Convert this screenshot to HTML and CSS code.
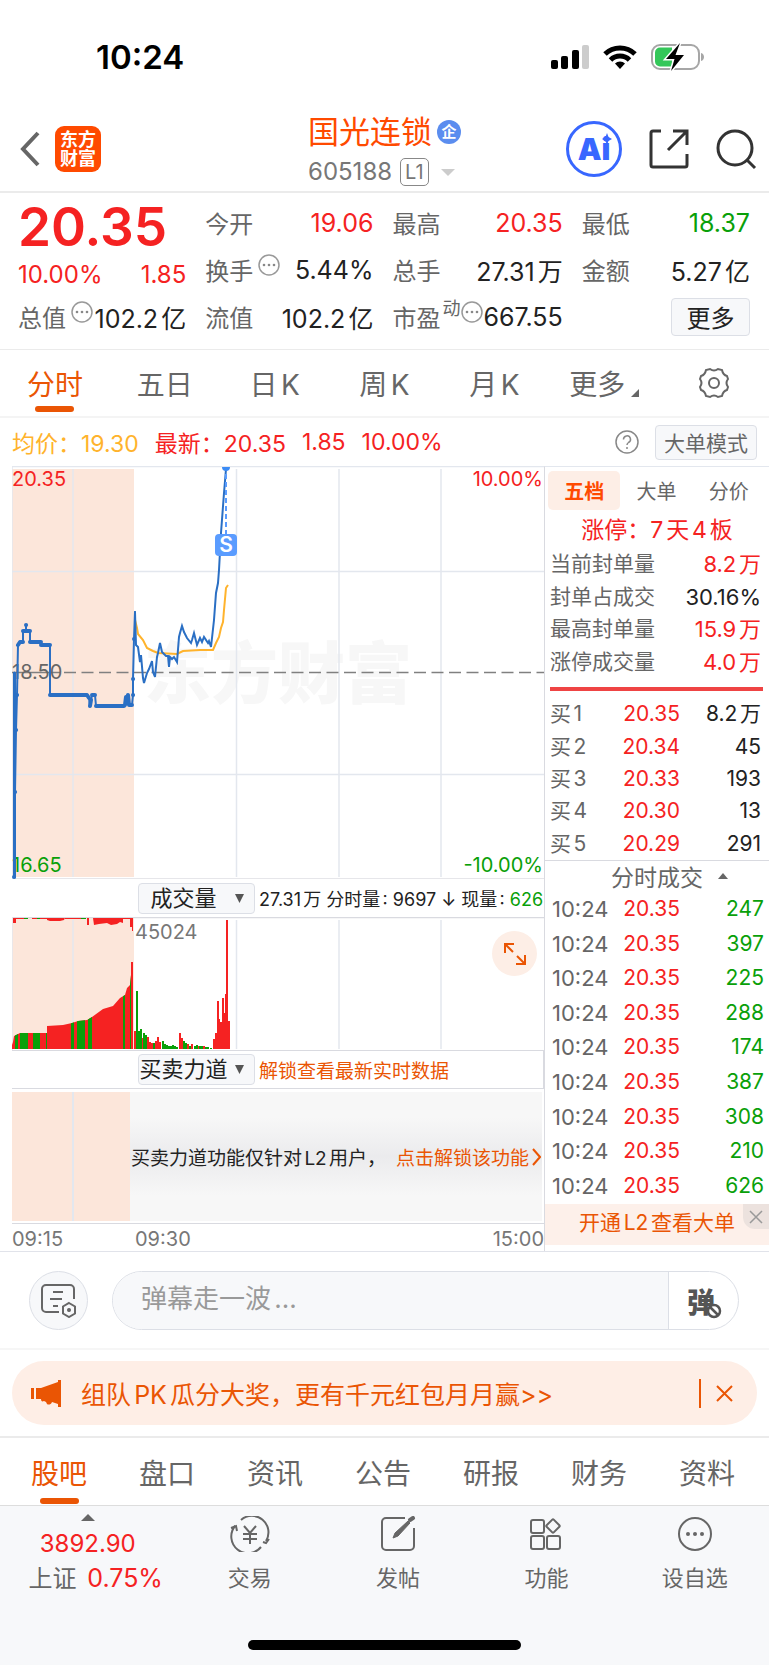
FILE: index.html
```
<!DOCTYPE html>
<html lang="zh-CN">
<head>
    <meta charset="UTF-8">
    <meta name="viewport" content="width=device-width, initial-scale=1.0">
    <title>国光连锁 605188</title>
    <link rel="stylesheet" href="styles.css">
</head>
<body>
    <div class="status-bar">
        <span class="time">10:24</span>
        <div class="status-icons">
            <svg width="38" height="26" viewBox="0 0 38 26">
                <rect x="0" y="16" width="7" height="9" rx="2"/>
                <rect x="10" y="12" width="7" height="13" rx="2"/>
                <rect x="21" y="6" width="7" height="19" rx="2"/>
                <rect x="31" y="1" width="7" height="24" rx="2" fill="#cccccc"/>
            </svg>
            <svg width="34" height="26" viewBox="0 0 34 26" fill="none" stroke="#000" stroke-width="5">
                <path d="M2 10a21.500 21.500 0 0 1 30 0"/>
                <path d="M7.500 16a13.500 13.500 0 0 1 19 0"/>
                <path d="M17 25l-5-5.500a7 7 0 0 1 10 0z" fill="#000" stroke="none"/>
            </svg>
            <svg width="54" height="28" viewBox="0 0 54 28">
                <rect x="1" y="2" width="47" height="24" rx="8" fill="none" stroke="#a6a6a6" stroke-width="2"/>
                <path d="M50 10c4 1 4 7 0 8z" fill="#a6a6a6"/>
                <path d="M9 4.500h12v19H9a5 5 0 0 1-5-5v-9a5 5 0 0 1 5-5z" fill="#34c759"/>
                <path d="M29 0L15 16h8.500L20 28l13-16h-8.500z" stroke="#fff" stroke-width="3" paint-order="stroke"/>
            </svg>
        </div>
    </div>

    <header class="header">
        <div class="header-left">
            <a href="#" class="back" aria-label="返回">
                <svg width="20" height="36" viewBox="0 0 20 36" fill="none" stroke="#666" stroke-width="4"><path d="M18 2L3 18l15 16"/></svg>
            </a>
            <div class="logo">东方<br>财富</div>
        </div>
        <div class="header-title">
            <h1>国光连锁<span class="badge">企</span></h1>
            <div class="code">605188<span class="level">L1</span><i class="tri-down"></i></div>
        </div>
        <div class="header-right">
            <button class="ai" aria-label="Ai">
                <span>Ai</span>
                <svg class="spark" width="10" height="12" viewBox="0 0 10 12"><path d="M5 0l1.500 4L10 6 6.500 8 5 12 3.500 8 0 6l3.500-2z" fill="#3867ff"/></svg>
            </button>
            <button aria-label="分享">
                <svg width="40" height="40" viewBox="0 0 40 40" fill="none" stroke="#333" stroke-width="3"><path d="M12 2H4a2 2 0 0 0-2 2v32a2 2 0 0 0 2 2h32a2 2 0 0 0 2-2V25M19 21L38 2M24 2h14v14"/></svg>
            </button>
            <button aria-label="搜索">
                <svg width="41" height="42" viewBox="0 0 41 42" fill="none" stroke="#333" stroke-width="3"><circle cx="19" cy="20" r="17"/><path d="M31 32l8 8"/></svg>
            </button>
        </div>
    </header>

    <section class="quote">
        <div class="quote-col">
            <div class="price red">20.35</div>
            <div class="change red"><span>10.00%</span><span>1.85</span></div>
            <div class="item"><span class="label">总值<svg class="dots" viewBox="0 0 22 22"><use href="#dots"/></svg></span><span>102.2亿</span></div>
        </div>
        <div class="quote-col">
            <div class="item"><span class="label">今开</span><span class="red">19.06</span></div>
            <div class="item"><span class="label">换手<svg class="dots far" viewBox="0 0 22 22"><use href="#dots"/></svg></span><span>5.44%</span></div>
            <div class="item"><span class="label">流值</span><span>102.2亿</span></div>
        </div>
        <div class="quote-col">
            <div class="item"><span class="label">最高</span><span class="red">20.35</span></div>
            <div class="item"><span class="label">总手</span><span>27.31万</span></div>
            <div class="item"><span class="label">市盈<sup>动</sup><svg class="dots near" viewBox="0 0 22 22"><g id="dots"><circle cx="11" cy="11" r="10" fill="none" stroke="#999" stroke-width="1.500"/><circle cx="6" cy="11" r="1.300" fill="#888"/><circle cx="11" cy="11" r="1.300" fill="#888"/><circle cx="16" cy="11" r="1.300" fill="#888"/></g></svg></span><span>667.55</span></div>
        </div>
        <div class="quote-col">
            <div class="item"><span class="label">最低</span><span class="green">18.37</span></div>
            <div class="item"><span class="label">金额</span><span>5.27亿</span></div>
            <div class="item end"><button class="more">更多</button></div>
        </div>
    </section>

    <nav class="tabs period">
        <a href="#" class="active">分时</a>
        <a href="#">五日</a>
        <a href="#">日K</a>
        <a href="#">周K</a>
        <a href="#">月K</a>
        <a href="#">更多<i class="corner"></i></a>
        <a href="#" aria-label="设置">
            <svg width="32" height="32" viewBox="0 0 32 32" fill="none" stroke="#666" stroke-width="2"><path d="M12 2q4 3 8 0l4 1q1 5 5 6l1 3q-3 4 0 8l-1 3q-4 1-5 6l-4 1q-4-3-8 0l-4-1q-1-5-5-6l-1-3q3-4 0-8l1-3q4-1 5-6z"/><circle cx="16" cy="16" r="5"/></svg>
        </a>
    </nav>

    <div class="summary">
        <span class="avg">均价：19.30</span>
        <span class="red">最新：20.35</span>
        <span class="red">1.85</span>
        <span class="red">10.00%</span>
        <button class="help" aria-label="帮助">
            <svg width="24" height="24" viewBox="0 0 24 24" fill="none" stroke="#888" stroke-width="1.500"><circle cx="12" cy="12" r="11"/><path d="M8.500 9.500a3.500 3.500 0 1 1 5 3q-1.500 1-1.500 2.500M12 17v2"/></svg>
        </button>
        <button class="mode">大单模式</button>
    </div>

    <main class="market">
        <div class="charts">
            <svg class="chart" viewBox="0 0 532 413">
                <rect x="0" y="3" width="122" height="408" fill="#fce6da"/>
                <text class="watermark" x="132" y="232">东方财富</text>
                <g stroke="#e3e7ee" stroke-width="1.500" fill="none">
                    <path d="M0 .5H532M0 413V0M61 3V411M224.500 3V411M327 3V411M429 3V411M0 105.500H532M0 308.500H532"/>
                </g>
                <path d="M0 412.500H532" stroke="#e6e6ea"/>
                <path d="M0 206.500H48" stroke="#808080" stroke-width="1.500"/>
                <path d="M52 206.500H532" stroke="#808080" stroke-width="1.500" stroke-dasharray="12 5.500"/>
                <text x="0" y="20" fill="#f52222">20.35</text>
                <text x="0" y="213" fill="#666">18.50</text>
                <text x="0" y="406" fill="#09a009">16.65</text>
                <text x="531" y="20" fill="#f52222" text-anchor="end">10.00%</text>
                <text x="531" y="406" fill="#09a009" text-anchor="end">-10.00%</text>
                <polyline fill="none" stroke="#ffb32c" stroke-width="2" points="123,154 125,162 126,168 131,174 135,182 141,185 146,187 165,188 171,185 188,184 201,184 204,177 207,171 209,162 211,156 212,144 214,122 216,119"/>
                <g fill="none" stroke="#2a6fc4" stroke-linejoin="round" stroke-linecap="round">
                    <polyline stroke-width="2" points="2,207 2,411 3,326 4,264 5,229 6,179 8,176 11,176 11,165 14,165 14,159 14,165 18,165 18,176 29,176 29,179 38,179 38,229 75,229 77,232 78,240 80,229 83,229 84,240 113,240 114,231 116,229 117,239 120,239 121,229 121,213 122,173 123,146"/>
                    <path stroke-width="3" d="M2.500 207V411"/>
                    <path stroke-width="4" d="M2 411h.1M3 326h.1M4 264h.1M5 229h.1M6 179l2-3h3M11 165h7M14 159h.1M18 176h11M29 179h9M38 229H75l2 3M78 240l1-6M80 229h3M84 240H112M113 239l1-8M116 229l1 10h3M121 229h.1M121 213h.1M122 173h.1"/>
                    <polyline stroke-width="2" stroke-linejoin="miter" points="123,146 124,179 126,181 128,196 129,189 131,212 132,217 135,207 137,203 140,195 141,206 143,211 145,191 146,187 148,177 150,186 154,190 156,190 157,201 158,191 160,193 162,191 165,196 167,171 168,167 170,160 172,166 175,172 179,177 180,174 182,167 185,179 188,172 190,176 192,171 196,177 197,175 199,181 202,154 204,127 206,117 207,104 209,67 212,27 214,3"/>
                </g>
                <path d="M214 8V68" stroke="#5a9cff" stroke-width="2" stroke-dasharray="5 3"/>
                <path d="M210 1h8a4 4 0 1 1-8 0z" fill="#3b8bf5"/>
                <rect x="203" y="68" width="22" height="22" rx="4" fill="#5a9cff"/>
                <text class="mark" x="214" y="86" text-anchor="middle">S</text>
            </svg>

            <div class="bar">
                <select class="indicator" aria-label="指标一"><option>成交量</option></select>
                <span class="bar-info">27.31万 分时量: 9697 ↓ 现量: <span class="green">626</span></span>
            </div>

            <div class="volume">
                <svg class="chart" viewBox="0 0 532 133">
                    <rect x="0" y="1" width="122" height="131" fill="#fce6da"/>
                    <path d="M0 .5H532" stroke="#d9dae0" stroke-width="1.500"/>
                    <path d="M61 3V132M224.500 3V132M327 3V132M429 3V132M0 0V133" stroke="#e3e7ee" stroke-width="1.500"/>
                    <clipPath id="auction"><path id="area" d="M0 132V128l1-3 1-6 6-3H35v-7l16-1 9-2 6-2 9-1 5-3 11-8 10-3 7-8 5-3 2-7 3-3 1-10V45h2v87z"/></clipPath>
                    <use href="#area" fill="#f52222"/>
                    <path clip-path="url(#auction)" fill="#09a009" d="M3 40h3v92H3zM8 40h8v92H8zM21 40h7v92h-7zM34 40h1v92h-1zM59 40h3v92h-3zM65 40h8v92h-8zM76 40h4v92h-4zM111 40h2v92h-2zM118 40h1v92h-1z"/>
                    <path fill="#f52222" d="M1 1h3v5H1zM35 1h18l-1 2-4 1H38l-3-1zM75 1h2v7h-2zM81 1h30v5l-3-1-3 2-6 1-4-2-8 1-5 1zM118 1h3v13h-1v-4h-2zM4 1h8v1H4zM20 1h15v1H20zM53 1h17v1H53zM111 1h8v1h-8z"/>
                    <path fill="#09a009" d="M12 1h4v1h-4zM25 1h3v1h-3zM69 1h5v1h-5z"/>
                    <path stroke="#f52222" stroke-width="2" fill="none" d="M123 132V114M130 132V121M136 132V120M138 132V125M140 132V126M144 132V124M146 132V120M148 132V125M168 132V116M170 132V121M176 132V127M180 132V127M186 132V129M192 132V129M202 132V122M204 132V116M206 132V84M207 132V102M209 132V105M211 132V81M213 132V96M214 132V77M215 132V3M217 132V104"/>
                    <path stroke="#09a009" stroke-width="2" fill="none" d="M125 132V74M127 132V114M129 132V112M132 132V116M134 132V118M142 132V126M151 132V124M153 132V127M155 132V128M157 132V129M159 132V129M161 132V128M163 132V129M165 132V130M172 132V124M174 132V126M178 132V129M183 132V129M185 132V128M188 132V129M190 132V129M194 132V130M196 132V130M199 132V131"/>
                    <text x="123" y="22" fill="#777">45024</text>
                </svg>
                <button class="expand" aria-label="展开">
                    <svg width="24" height="24" viewBox="0 0 24 24" fill="none" stroke="#ea5504" stroke-width="2"><path d="M11 2H2v9M2 2l8 8M22 13v9h-9M22 22l-8-8"/></svg>
                </button>
            </div>

            <div class="bar boxed">
                <select class="indicator" aria-label="指标二"><option>买卖力道</option></select>
                <a href="#" class="unlock">解锁查看最新实时数据</a>
            </div>

            <div class="locked">
                <div class="locked-pre"></div>
                <div class="locked-msg"><span>买卖力道功能仅针对L2用户，</span><a href="#">点击解锁该功能<svg width="9" height="18" viewBox="0 0 9 18" fill="none" stroke="#ea5504" stroke-width="2"><path d="M1 1l7 8-7 8"/></svg></a></div>
            </div>
            <div class="axis"><span>09:15</span><span>09:30</span><span>15:00</span></div>
        </div>

        <aside class="side">
            <div class="side-tabs">
                <button class="active">五档</button>
                <button>大单</button>
                <button>分价</button>
            </div>
            <div class="limit red">涨停：7天4板</div>
            <table class="orders seal">
                <tr><th>当前封单量</th><td class="red">8.2万</td></tr>
                <tr><th>封单占成交</th><td>30.16%</td></tr>
                <tr><th>最高封单量</th><td class="red">15.9万</td></tr>
                <tr><th>涨停成交量</th><td class="red">4.0万</td></tr>
            </table>
            <div class="ratio"></div>
            <table class="orders bids">
                <tr><th>买1</th><td class="red">20.35</td><td>8.2万</td></tr>
                <tr><th>买2</th><td class="red">20.34</td><td>45</td></tr>
                <tr><th>买3</th><td class="red">20.33</td><td>193</td></tr>
                <tr><th>买4</th><td class="red">20.30</td><td>13</td></tr>
                <tr><th>买5</th><td class="red">20.29</td><td>291</td></tr>
            </table>
            <button class="deals-title">分时成交<i class="tri-up"></i></button>
            <table class="orders deals">
                <tr><th>10:24</th><td class="red">20.35</td><td class="green">247</td></tr>
                <tr><th>10:24</th><td class="red">20.35</td><td class="green">397</td></tr>
                <tr><th>10:24</th><td class="red">20.35</td><td class="green">225</td></tr>
                <tr><th>10:24</th><td class="red">20.35</td><td class="green">288</td></tr>
                <tr><th>10:24</th><td class="red">20.35</td><td class="green">174</td></tr>
                <tr><th>10:24</th><td class="red">20.35</td><td class="green">387</td></tr>
                <tr><th>10:24</th><td class="red">20.35</td><td class="green">308</td></tr>
                <tr><th>10:24</th><td class="red">20.35</td><td class="green">210</td></tr>
                <tr><th>10:24</th><td class="red">20.35</td><td class="green">626</td></tr>
            </table>
            <div class="l2">
                <a href="#">开通L2查看大单</a>
                <button class="l2-close" aria-label="关闭"><svg width="14" height="14" viewBox="0 0 14 14" stroke="#999" stroke-width="1.500"><path d="M1 1l12 12M13 1L1 13"/></svg></button>
            </div>
        </aside>
    </main>

    <div class="barrage">
        <button class="round" aria-label="弹幕设置">
            <svg width="36" height="34" viewBox="0 0 36 34" fill="none" stroke="#666" stroke-width="2"><path d="M18 28H5a4 4 0 0 1-4-4V5a4 4 0 0 1 4-4h24a4 4 0 0 1 4 4v10M12 8h10M9 15h12M12 22h5"/><path d="M28 19l6 3.500v7L28 33l-6-3.500v-7z"/><circle cx="28" cy="26" r="1.500" fill="#666" stroke="none"/><circle cx="28" cy="26" r="1"/></svg>
        </button>
        <div class="barrage-box">
            <input type="text" placeholder="弹幕走一波..." aria-label="弹幕">
            <button class="toggle" aria-label="关闭弹幕">弹<svg class="ban" width="16" height="16" viewBox="0 0 16 16" fill="#fff" stroke="#555" stroke-width="2.500"><circle cx="8" cy="8" r="6"/><path d="M4 4l8 8"/></svg></button>
        </div>
    </div>

    <div class="promo-wrap">
        <div class="promo">
            <svg width="31" height="27" viewBox="0 0 31 27" fill="#ea5504"><path d="M0 8h3v11H0zM5 8h5L27 2V0h3v27h-3v-3l-6-2c-1 3-4 3-5 2l-1-2-2-1c-2 1-3 0-3-2H5z"/></svg>
            <a href="#">组队PK瓜分大奖，更有千元红包月月赢&gt;&gt;</a>
            <button aria-label="关闭"><svg width="17" height="17" viewBox="0 0 17 17" stroke="#ea5504" stroke-width="2"><path d="M1 1l15 15M16 1L1 16"/></svg></button>
        </div>
    </div>

    <nav class="tabs info">
        <a href="#" class="active">股吧</a>
        <a href="#">盘口</a>
        <a href="#">资讯</a>
        <a href="#">公告</a>
        <a href="#">研报</a>
        <a href="#">财务</a>
        <a href="#">资料</a>
    </nav>

    <footer class="footer">
        <div class="toolbar">
            <a href="#" class="index">
                <i class="tri-up"></i>
                <span class="red">3892.90</span>
                <span class="index-name">上证 <b class="red">0.75%</b></span>
            </a>
            <a href="#">
                <svg width="40" height="36" viewBox="0 0 40 36" fill="none" stroke="#666" stroke-width="2"><path d="M11 4A16.500 16.500 0 0 1 36 25M31 31A16.500 16.500 0 0 1 5 10M1 12l5-2 1 5M33 26l3 1 3-4M14 10l6 7 6-7M20 17v11M13 18h14M13 23h14"/></svg>
                <span>交易</span>
            </a>
            <a href="#">
                <svg width="36" height="36" viewBox="0 0 36 36" fill="none" stroke="#666" stroke-width="2"><path d="M25 2H6a4 4 0 0 0-4 4v24a4 4 0 0 0 4 4h24a4 4 0 0 0 4-4V12"/><path d="M13 22l2-5L28 5l2 2-12 13z" fill="#666" stroke-width="1"/><path d="M30 4l3-2" stroke-width="4" stroke-linecap="round"/></svg>
                <span>发帖</span>
            </a>
            <a href="#">
                <svg width="34" height="36" viewBox="0 0 34 36" fill="none" stroke="#666" stroke-width="2"><rect x="2" y="4" width="13" height="13" rx="2"/><rect x="2" y="20" width="13" height="13" rx="2"/><rect x="18" y="20" width="13" height="13" rx="2"/><rect x="19" y="5" width="10" height="10" rx="1" transform="rotate(45 24 10)"/></svg>
                <span>功能</span>
            </a>
            <a href="#">
                <svg width="36" height="36" viewBox="0 0 36 36"><circle cx="18" cy="18" r="16" fill="none" stroke="#666" stroke-width="2"/><g fill="#666"><circle cx="11" cy="18" r="2"/><circle cx="18" cy="18" r="2"/><circle cx="25" cy="18" r="2"/></g></svg>
                <span>设自选</span>
            </a>
        </div>
        <div class="home"></div>
    </footer>
</body>
</html>
```
FILE: styles.css
```
* {
    box-sizing: border-box;
}
body {
    margin: 0;
    background: #fff;
    color: #222;
    font-family: Inter, "Noto Sans CJK SC", sans-serif;
    font-size: 24px;
    text-autospace: normal;
}
a {
    color: inherit;
    text-decoration: none;
}
button {
    padding: 0;
    border: none;
    background: none;
    color: inherit;
    font: inherit;
    cursor: pointer;
}
svg {
    display: block;
    flex-shrink: 0;
}
.red { color: #f52222; }
.green { color: #09a009; }

.tri-down,
.tri-up {
    border: 7px solid transparent;
}
.tri-down {
    border-top-color: #ccc;
    border-bottom: none;
}
.tri-up {
    border-bottom-color: #666;
    border-top: none;
}

/* Status bar */
.status-bar {
    display: flex;
    justify-content: space-between;
    align-items: center;
    height: 106px;
    padding: 8px 64px 0 96px;
}
.time {
    color: #000;
    font-size: 33px;
    font-weight: 600;
}
.status-icons {
    display: flex;
    align-items: center;
    gap: 14px;
}

/* Header */
.header {
    display: grid;
    grid-template-columns: 1fr auto 1fr;
    align-items: center;
    height: 87px;
    padding: 0 12px 2px;
    border-bottom: 2px solid #ebebeb;
}
.header-left,
.header-right {
    display: flex;
    align-items: center;
}
.header-left {
    gap: 15px;
    padding-left: 8px;
}
.header-right {
    justify-content: flex-end;
    gap: 27px;
}
.logo {
    width: 46px;
    height: 46px;
    padding-top: 4px;
    border-radius: 9px;
    background: #ff4a00;
    color: #fff;
    font-size: 18px;
    font-weight: 700;
    line-height: 19px;
    text-align: center;
}
.header-title {
    padding-top: 5px;
}
.header-title h1 {
    display: flex;
    align-items: center;
    gap: 5px;
    margin: 0;
    color: #ff4a00;
    font-size: 31px;
    font-weight: 400;
    line-height: 42px;
}
.badge {
    width: 24px;
    height: 24px;
    border-radius: 50%;
    background: #5b8def;
    color: #fff;
    font-size: 15px;
    font-weight: 700;
    line-height: 23px;
    text-align: center;
}
.code {
    display: flex;
    align-items: center;
    color: #777;
    font-size: 24px;
    line-height: 38px;
}
.level {
    margin: 0 12px 0 8px;
    padding: 0 4px;
    border: 1px solid #888;
    border-radius: 5px;
    font-size: 20px;
    line-height: 26px;
}
.ai {
    position: relative;
    width: 56px;
    height: 56px;
    border: 3px solid #3867ff;
    border-radius: 50%;
    color: #3867ff;
    font-size: 30px;
    font-weight: 900;
}
.spark {
    position: absolute;
    top: 9px;
    right: 7px;
}

/* Quote */
.quote {
    display: grid;
    grid-template-columns: repeat(4, 1fr);
    gap: 19px;
    padding: 6px 19px 9px 18px;
    border-bottom: 1px solid #ebebeb;
    font-size: 25px;
}
.price {
    font-size: 53px;
    font-weight: 600;
    line-height: 56px;
}
.change {
    display: flex;
    justify-content: space-between;
    height: 38px;
    font-size: 24px;
    line-height: 40px;
}
.item {
    display: flex;
    justify-content: space-between;
    align-items: center;
    height: 47px;
    white-space: nowrap;
}
.item.end {
    justify-content: flex-end;
}
.label {
    display: flex;
    align-items: center;
    color: #666;
    font-size: 24px;
}
.label sup {
    font-size: 18px;
    line-height: 20px;
    margin-bottom: 16px;
    margin-left: 2px;
}
.dots {
    width: 22px;
    height: 22px;
    margin-left: 5px;
    margin-bottom: 10px;
}
.dots.near {
    margin-left: 1px;
}
.more,
.mode {
    border: 1px solid #dcdfe6;
    border-radius: 4px;
    background: #f7f8fa;
}
.more {
    width: 79px;
    height: 38px;
    font-size: 24px;
}

/* Tabs */
.tabs {
    display: grid;
    grid-template-columns: repeat(7, 1fr);
    height: 68px;
    border-bottom: 2px solid #f4f4f4;
    color: #666;
    font-size: 28px;
}
.tabs a {
    position: relative;
    display: flex;
    justify-content: center;
    align-items: center;
}
.tabs .active {
    color: #ea5504;
}
.tabs .active::after {
    content: "";
    position: absolute;
    bottom: 4px;
    width: 39px;
    height: 6px;
    border-radius: 3px;
    background: #ea5504;
}
.corner {
    align-self: flex-end;
    margin: 0 0 19px 6px;
    border: 4px solid #666;
    border-top-color: transparent;
    border-left-color: transparent;
}
.info {
    padding: 0 8px 0 5px;
    border-bottom: 1px solid #ddd;
}
.info .active::after {
    bottom: 1px;
}

/* Summary line */
.summary {
    display: flex;
    align-items: center;
    gap: 16px;
    height: 48px;
    padding: 0 12px;
    font-size: 23px;
    white-space: nowrap;
}
.avg {
    color: #ffb32c;
}
.help {
    margin-left: auto;
}
.mode {
    height: 35px;
    padding: 0 8px;
    color: #666;
    font-size: 21px;
}

/* Charts */
.market {
    display: flex;
    border-bottom: 1px solid #e1e3ea;
}
.charts {
    flex: 1;
    min-width: 0;
    padding-left: 12px;
}
.chart {
    width: 100%;
    height: auto;
    font-size: 20px;
}
.watermark {
    fill: #f7f7f7;
    font-size: 67px;
    font-weight: 900;
}
.mark {
    fill: #fff;
    font-size: 21px;
    font-weight: 600;
}
.bar {
    display: flex;
    align-items: center;
    gap: 4px;
    height: 38px;
    padding-left: 126px;
    font-size: 18px;
    white-space: nowrap;
}
.boxed {
    height: 39px;
    border: 1px solid #d9dae0;
    border-left: none;
}
.indicator {
    width: 117px;
    height: 31px;
    padding: 0 26px 0 0;
    border: 1px solid #dcdfe6;
    border-radius: 4px;
    background: #f7f8fa url("data:image/svg+xml;charset=UTF-8,%3csvg xmlns='http://www.w3.org/2000/svg' width='9' height='9' fill='%23555'%3e%3cpath d='M0 0h9L4.500 9z'/%3e%3c/svg%3e") no-repeat right 10px center;
    color: #222;
    font-family: inherit;
    font-size: 22px;
    line-height: 29px;
    text-align-last: center;
    appearance: none;
}
.unlock {
    color: #ea5504;
    font-size: 19px;
}
.volume {
    position: relative;
}
.expand {
    position: absolute;
    top: 14px;
    right: 7px;
    display: flex;
    justify-content: center;
    align-items: center;
    width: 45px;
    height: 45px;
    border-radius: 50%;
    background: #fdeee6;
}
.locked {
    display: flex;
    height: 135px;
    padding: 3px 2px 2px 0;
    border-bottom: 1px solid #d9dae0;
    font-size: 19px;
    white-space: nowrap;
}
.locked-pre {
    width: 118px;
    background: linear-gradient(to right, #fce6da 60px, #e3e7ee 60px, #e3e7ee 62px, #fce6da 62px);
}
.locked-msg {
    flex: 1;
    display: flex;
    justify-content: space-between;
    align-items: center;
    padding: 0 1px;
    background: linear-gradient(#f7f7f7 20%, #ebebed 50%, #f7f7f7 80%);
}
.locked-msg a {
    display: flex;
    align-items: center;
    gap: 3px;
    color: #ea5504;
}
.axis {
    display: flex;
    height: 27px;
    color: #777;
    font-size: 20px;
    line-height: 30px;
}
.axis span:first-child {
    width: 123px;
}
.axis span:last-child {
    margin-left: auto;
}

/* Side panel */
.side {
    display: flex;
    flex-direction: column;
    width: 225px;
    border-left: 1px solid #d9dae0;
    border-top: 1px solid #e3e7ee;
    font-size: 21px;
}
.side-tabs {
    display: grid;
    grid-template-columns: repeat(3, 1fr);
    margin: 4px 4px 0 3px;
    color: #666;
    font-size: 20px;
}
.side-tabs button {
    height: 39px;
    border-radius: 5px;
}
.side-tabs .active {
    background: #fdeee6;
    color: #ff4a00;
    font-weight: 700;
}
.limit {
    height: 38px;
    font-size: 23px;
    line-height: 40px;
    text-align: center;
}
.orders {
    margin: 0 8px 0 5px;
    border-collapse: collapse;
    line-height: 24px;
}
.orders th,
.orders td {
    padding: 0;
    font-weight: 400;
    text-align: right;
}
.orders th {
    color: #666;
    text-align: left;
}
.seal {
    height: 130px;
}
.seal td {
    font-size: 22px;
}
.ratio {
    height: 4px;
    margin: 9px 6px 7px 5px;
    background: #ef4444;
}
.bids {
    height: 162px;
}
.bids th {
    width: 70px;
}
.bids .red,
.deals .red {
    width: 60px;
}
.deals-title {
    display: flex;
    justify-content: center;
    align-items: center;
    gap: 15px;
    height: 32px;
    padding: 0 0 2px 25px;
    border-top: 1px solid #d9dae0;
    color: #666;
    font-size: 23px;
}
.deals-title .tri-up {
    border-width: 0 5px 6px;
}
.deals {
    height: 311px;
    margin: 0 5px 1px 7px;
}
.deals th {
    width: 68px;
    font-size: 22px;
}
.l2 {
    position: relative;
    height: 41px;
    background: #fdf0ea;
    color: #ea5504;
    line-height: 38px;
    text-align: center;
}
.l2-close {
    position: absolute;
    top: 0;
    right: 0;
    display: flex;
    justify-content: center;
    align-items: center;
    width: 26px;
    height: 25px;
    border-bottom-left-radius: 12px;
    background: #ece2de;
}

/* Barrage */
.barrage {
    display: flex;
    gap: 24px;
    padding: 19px 30px 18px 29px;
    border-bottom: 2px solid #f6f6f6;
}
.round {
    display: flex;
    justify-content: center;
    align-items: center;
    width: 59px;
    height: 59px;
    border: 1px solid #dcdfe6;
    border-radius: 50%;
    background: #f7f8fa;
}
.barrage-box {
    flex: 1;
    display: flex;
    overflow: hidden;
    border: 1px solid #dcdfe6;
    border-radius: 30px;
}
.barrage-box input {
    flex: 1;
    min-width: 0;
    padding: 0 28px 4px;
    border: none;
    background: #f7f8fa;
    font-family: inherit;
    font-size: 26px;
}
.barrage-box input::placeholder {
    color: #999;
}
.toggle {
    position: relative;
    width: 70px;
    padding-right: 5px;
    border-left: 1px solid #dcdfe6;
    color: #555;
    font-size: 28px;
    font-weight: 900;
}
.ban {
    position: absolute;
    right: 16px;
    bottom: 10px;
}

/* Promo */
.promo-wrap {
    padding: 11px 12px;
    border-bottom: 2px solid #ebebeb;
}
.promo {
    display: flex;
    align-items: center;
    gap: 19px;
    height: 64px;
    padding: 0 24px 0 19px;
    border-radius: 32px;
    background: #feeee6;
    color: #ea5504;
    font-size: 25px;
}
.promo button {
    margin-left: auto;
    padding: 6px 0 6px 15px;
    border-left: 2px solid #ea5504;
}

/* Footer */
.footer {
    height: 160px;
    padding: 8px 0 16px;
    display: flex;
    flex-direction: column;
    justify-content: space-between;
    align-items: center;
    background: #f7f8fa;
}
.toolbar {
    display: grid;
    grid-template-columns: 175fr repeat(4, 148fr);
    width: 100%;
    color: #666;
    font-size: 22px;
    line-height: 32px;
}
.toolbar a {
    display: flex;
    flex-direction: column;
    align-items: center;
    justify-content: space-between;
    height: 80px;
    padding-top: 2px;
}
.toolbar .index {
    justify-content: flex-start;
    padding-top: 0;
    font-size: 24px;
    line-height: 35px;
}
.index .tri-up {
    margin-bottom: 5px;
}
.index-name {
    padding-left: 16px;
}
.index b {
    margin-left: 4px;
    font-size: 25px;
    font-weight: 400;
}
.home {
    width: 273px;
    height: 10px;
    border-radius: 5px;
    background: #000;
}
```
